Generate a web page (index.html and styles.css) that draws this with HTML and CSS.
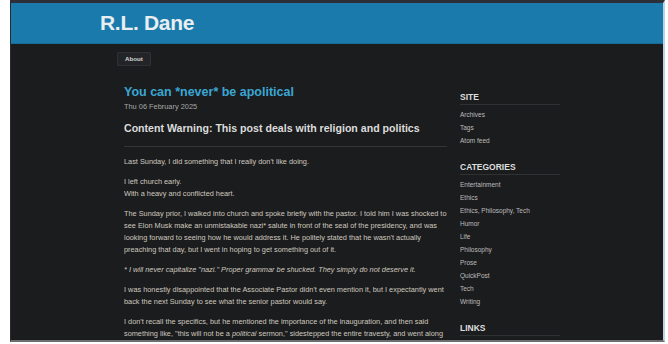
FILE: index.html
```html
<!DOCTYPE html>
<html lang="en">
<head>
<meta charset="utf-8">
<title>R.L. Dane</title>
<link rel="stylesheet" href="styles.css">
</head>
<body>
<div class="frame">
  <header class="site-header">
    <h1 class="site-title">R.L. Dane</h1>
  </header>
  <nav class="nav">
    <a class="nav-btn" href="#">About</a>
  </nav>
  <div class="page">
    <main class="post">
      <h2 class="post-title">You can *never* be apolitical</h2>
      <div class="post-date">Thu 06 February 2025</div>
      <h3 class="post-warning">Content Warning: This post deals with religion and politics</h3>
      <hr class="rule">
      <p>Last Sunday, I did something that I really don't like doing.</p>
      <p>I left church early.<br>With a heavy and conflicted heart.</p>
      <p>The Sunday prior, I walked into church and spoke briefly with the pastor. I told him I was shocked to see Elon Musk make an unmistakable nazi* salute in front of the seal of the presidency, and was looking forward to seeing how he would address it. He politely stated that he wasn't actually preaching that day, but I went in hoping to get something out of it.</p>
      <p class="note">* I will never capitalize "nazi." Proper grammar be shucked. They simply do not deserve it.</p>
      <p>I was honestly disappointed that the Associate Pastor didn't even mention it, but I expectantly went back the next Sunday to see what the senior pastor would say.</p>
      <p>I don't recall the specifics, but he mentioned the importance of the inauguration, and then said something like, "this will not be a <em>political</em> sermon," sidestepped the entire travesty, and went along</p>
    </main>
    <aside class="sidebar">
      <section class="side-block">
        <h4 class="side-head">SITE</h4>
        <ul class="side-list">
          <li><a href="#">Archives</a></li>
          <li><a href="#">Tags</a></li>
          <li><a href="#">Atom feed</a></li>
        </ul>
      </section>
      <section class="side-block">
        <h4 class="side-head">CATEGORIES</h4>
        <ul class="side-list">
          <li><a href="#">Entertainment</a></li>
          <li><a href="#">Ethics</a></li>
          <li><a href="#">Ethics, Philosophy, Tech</a></li>
          <li><a href="#">Humor</a></li>
          <li><a href="#">Life</a></li>
          <li><a href="#">Philosophy</a></li>
          <li><a href="#">Prose</a></li>
          <li><a href="#">QuickPost</a></li>
          <li><a href="#">Tech</a></li>
          <li><a href="#">Writing</a></li>
        </ul>
      </section>
      <section class="side-block">
        <h4 class="side-head">LINKS</h4>
      </section>
    </aside>
  </div>
</div>
</body>
</html>
```

FILE: styles.css
```css
html, body {
  margin: 0;
  padding: 0;
  background: #ffffff;
  height: 344px;
  overflow: hidden;
}
body {
  font-family: "Liberation Sans", Arial, sans-serif;
}
.frame {
  margin-left: 10px;
  width: 655px;
  height: 342px;
  background: #1b1c1e;
  border-top: 3px solid #2c2f37;
  border-left: 1px solid #2a2a2c;
  border-right: 2px solid #b9d3e2;
  border-bottom: 2px solid #6e6e70;
  overflow: hidden;
  box-sizing: border-box;
}
.site-header {
  background: #1a7aab;
  height: 41px;
  border-bottom: 1px solid #176b96;
  box-sizing: border-box;
  padding-left: 89px;
  display: flex;
  align-items: center;
}
.site-title {
  margin: 0;
  font-size: 21px;
  font-weight: bold;
  color: #e9eef2;
  line-height: 26px;
  letter-spacing: -0.3px;
}
.nav {
  display: flex;
  padding: 8px 0 0 106px;
}
.nav-btn {
  display: block;
  height: 14px;
  line-height: 12px;
  padding: 0 7px;
  background: #232427;
  border: 1px solid #303134;
  box-sizing: border-box;
  color: #d6d6d6;
  font-size: 6.2px;
  font-weight: bold;
  text-decoration: none;
  border-radius: 1px;
}
.page {
  display: flex;
  gap: 13px;
  padding-left: 113px;
  padding-top: 19px;
}
.post {
  width: 323px;
  flex: none;
}
.post-title {
  margin: 0;
  font-size: 12.5px;
  line-height: 15px;
  font-weight: bold;
  color: #3aa7d3;
}
.post-date {
  font-size: 7.4px;
  line-height: 10px;
  color: #a8a8a8;
  margin-top: 2px;
}
.post-warning {
  margin: 10px 0 0 0;
  font-size: 10.6px;
  line-height: 13px;
  font-weight: bold;
  color: #dcdcdc;
}
.rule {
  border: 0;
  border-top: 1px solid #333436;
  margin: 11px 0 9px 0;
}
.post p {
  margin: 0 0 8px 0;
  font-size: 7.35px;
  line-height: 12px;
  color: #cfc9bf;
}
.post p.note {
  font-style: italic;
}
.sidebar {
  width: 100px;
  flex: none;
  padding-top: 6px;
}
.side-block {
  margin-bottom: 14px;
}
.side-head {
  margin: 0;
  font-size: 8.5px;
  line-height: 12px;
  font-weight: bold;
  color: #dedede;
  border-bottom: 1px solid #303134;
  padding-bottom: 1px;
}
.side-list {
  list-style: none;
  margin: 3px 0 0 0;
  padding: 0;
}
.side-list li {
  font-size: 6.5px;
  line-height: 13px;
}
.side-list a {
  color: #bdbdbd;
  text-decoration: none;
}
```
